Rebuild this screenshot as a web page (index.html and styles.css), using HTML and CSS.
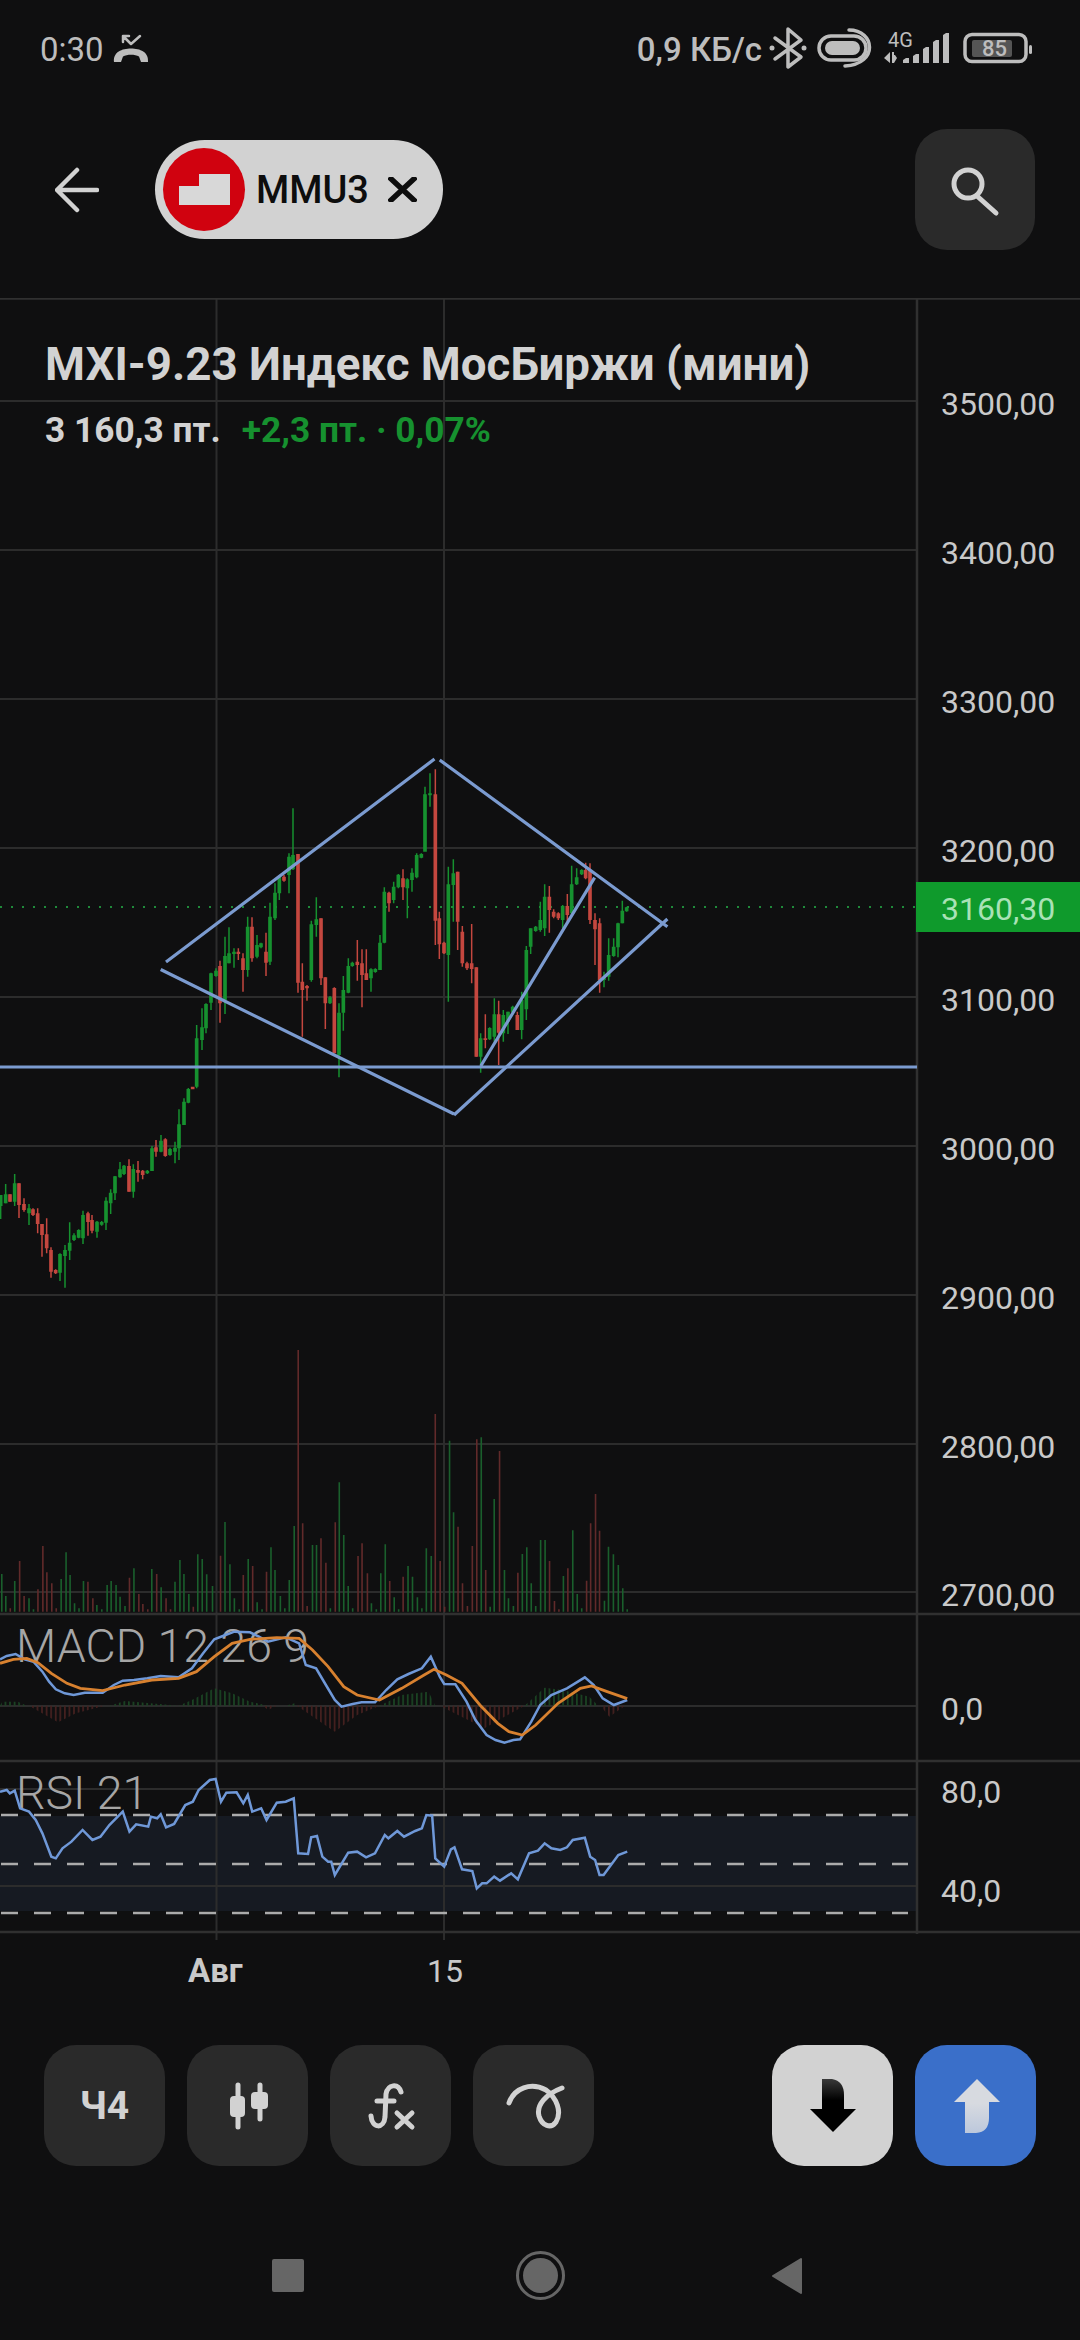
FILE: index.html
```html
<!DOCTYPE html>
<html lang="ru">
<head>
<meta charset="utf-8">
<title>MXI-9.23</title>
<link rel="stylesheet" href="styles.css">
</head>
<body>
<div class="screen">
  <header class="statusbar">
    <div class="status-left">
      <span class="clock">0:30</span>
      <svg class="ic-call" viewBox="112 20 38 58"><path class="st st-thin" d="M123 36L131 44L140 36M123 36V42M123 36H129"/><path class="sf" d="M114 62C113 52 122 48.500 131 48.500C140 48.500 149 52 148 62H141L139 56.500C135 54 127 54 123 56.500L121 62Z"/></svg>
    </div>
    <div class="status-right">
      <span class="speed">0,9 КБ/с</span>
      <svg class="ic-status" viewBox="768 20 266 58">
        <path class="st" d="M775 38L801 57L788 67V29L801 40L775 59"/>
        <circle class="sf" cx="772" cy="48" r="2.500"/><circle class="sf" cx="804" cy="48" r="2.500"/>
        <rect class="st" x="819" y="36" width="47" height="24" rx="12"/>
        <rect class="sf" x="825" y="41" width="35" height="14" rx="7"/>
        <path class="st" d="M849 30C875 30 879 64 845 66"/>
        <text class="net" x="888" y="47">4G</text>
        <path class="sf" d="M884 58L890 52V63ZM892 52V63H894L897 58L895 55H894V52Z"/>
        <path class="sf" d="M903 60l3-2h3v5h-6ZM913 56l3-2h3v9h-6ZM923 49l3-2h3v16h-6ZM933 42l3-2h3v23h-6ZM943 35l3-2h3v30h-6Z"/>
        <rect class="st" x="965" y="34.500" width="61" height="27" rx="7"/>
        <rect class="bat-fill" x="972" y="40" width="40" height="17" rx="2"/>
        <text class="bat" x="982" y="56">85</text>
        <rect class="sf" x="1029" y="45" width="3" height="9" rx="1.500"/>
      </svg>
    </div>
  </header>

  <nav class="topbar">
    <svg class="ic-back" viewBox="55 160 44 56"><path d="M97 188H58M77 168L57 188L77 208"/></svg>
    <div class="chip">
      <span class="chip-logo"><svg viewBox="0 0 51 31"><path d="M20 0H51V31H0V12H20Z"/></svg></span>
      <span class="chip-name">MMU3</span>
      <svg class="ic-x" viewBox="0 0 29 25"><path d="M1 0L28 25M28 0L1 25"/></svg>
    </div>
    <button class="tile search-tile" type="button" aria-label="Поиск"><svg class="ic-search" viewBox="948 162 54 54"><circle cx="968" cy="183" r="14"/><path d="M977 195L996 212"/></svg></button>
  </nav>

  <main class="chart">
    <svg class="chart-svg" viewBox="0 298 1080 1702" width="1080" height="1702">
      <defs>
        <pattern id="hist-g" patternUnits="userSpaceOnUse" width="10.240" height="10"><rect width="3.800" height="10" class="hist-g"/></pattern>
        <pattern id="hist-r" patternUnits="userSpaceOnUse" width="10.240" height="10"><rect width="3.800" height="10" class="hist-r"/></pattern>
      </defs>

      <rect class="rsi-band" x="0" y="1816" width="917" height="95"/>

      <path class="grid" d="M0 401H917M0 550H917M0 699H917M0 848H917M0 997H917M0 1146H917M0 1295H917M0 1444H917M0 1592H917M0 1706H917M0 1789H917M0 1886H917"/>
      <path class="grid" d="M216.500 298V1940M444 298V1940"/>
      <path class="frame" d="M917 298V1934M0 298.500H1080M0 1614H1080M0 1761H1080M0 1932H1080"/>

      <g transform="translate(0 1320) scale(.44643 .33333)">
        <path class="vol-g" d="M4 762V875M13 828V875M33 783V875M65 835V875M75 868V875M137 777V875M148 697V875M157 765V875M167 850V875M177 865V875M187 783V875M217 855V875M228 868V875M240 795V875M249 783V875M260 795V875M269 830V875M280 858V875M300 745V875M340 747V875M361 802V875M392 785V875M403 720V875M412 762V875M423 822V875M443 703V875M453 717V875M463 763V875M476 798V875M504 606V875M515 733V875M525 835V875M536 868V875M556 717V875M576 847V875M587 868V875M607 682V875M616 750V875M628 828V875M638 865V875M648 780V875M659 618V875M700 675V875M709 675V875M740 865V875M760 487V875M770 645V875M780 798V875M790 865V875M832 850V875M843 868V875M853 760V875M863 673V875M883 832V875M893 868V875M914 738V875M924 770V875M935 832V875M945 865V875M955 685V875M966 708V875M1007 362V875M1016 577V875M1078 352V875M1098 860V875M1107 537V875M1130 750V875M1139 835V875M1150 858V875M1170 702V875M1180 682V875M1190 790V875M1200 858V875M1211 660V875M1221 660V875M1262 768V875M1283 631V875M1293 822V875M1303 865V875M1354 842V875M1363 680V875M1374 703V875M1385 735V875M1395 805V875M1405 868V875"/>
        <path class="vol-r" d="M23 865V875M44 723V875M54 828V875M85 808V875M96 678V875M105 757V875M116 790V875M126 865V875M197 785V875M208 835V875M290 773V875M311 822V875M320 852V875M331 868V875M351 762V875M372 835V875M382 868V875M433 860V875M494 707V875M545 765V875M566 738V875M597 755V875M668 90V875M678 610V875M688 858V875M719 655V875M730 728V875M751 607V875M802 708V875M811 670V875M823 760V875M873 783V875M903 770V875M975 282V875M986 723V875M996 860V875M1026 620V875M1036 790V875M1047 858V875M1058 678V875M1068 358V875M1088 750V875M1119 393V875M1160 758V875M1231 723V875M1242 843V875M1252 868V875M1272 745V875M1314 782V875M1323 610V875M1334 522V875M1343 632V875"/>
      </g>

      <line class="last-price" x1="0" y1="907" x2="917" y2="907"/>

      <g transform="translate(0 1100) scale(.33333)">
        <path class="wick-g" d="M2 285V357M17 252V310M44 222V318M87 312V375M180 460V543M195 435V563M209 367V480M222 400V423M236 388V415M249 332V432M291 363V413M305 363V377M318 292V390M332 268V342M345 228V300M360 186V233M372 195V225M400 193V293M442 210V222M456 138V213M483 105V157M510 143V167M525 125V190M537 28V180M552 -5V75M565 -36V10"/>
        <path class="body-g" d="M2 285V318M17 283V310M44 250V305M87 325V340M180 462V518M195 450V468M209 428V452M222 406V420M236 390V413M249 345V415M291 365V395M305 366V374M318 302V368M332 278V310M345 229V280M360 208V232M372 197V222M400 207V275M442 212V220M456 145V213M483 122V155M510 147V165M525 143V155M537 73V145M552 5V75M565 -33V8"/>
        <path class="wick-r" d="M30 283V305M57 250V354M72 295V335M99 325V348M113 325V400M126 372V470M140 355V460M153 442V533M167 508V522M264 335V407M276 345V400M387 178V275M414 183V245M428 210V238M468 120V170M496 115V170"/>
        <path class="body-r" d="M30 283V305M57 250V315M72 312V330M99 328V345M113 340V372M126 372V405M140 403V445M153 450V515M167 510V520M264 340V366M276 360V392M387 198V275M414 210V218M428 212V225M468 142V155M496 118V168M578 -40V-32"/>
      </g>

      <g transform="translate(190 790) scale(.33333)">
        <path class="wick-g" d="M20 705V895M36 655V780M48 640V730M63 548V660M78 535V560M105 440V672M117 412V520M132 475V533M173 380V560M201 435V505M213 458V475M240 338V525M255 280V390M268 255V330M297 190V310M309 55V240M364 392V575M379 322V440M420 618V642M447 640V862M460 558V722M475 505V610M487 515V530M543 535V605M556 535V548M570 435V540M583 292V460M611 275V340M625 252V295M652 265V385M666 235V305M680 190V265M694 190V205"/>
        <path class="body-g" d="M20 745V890M36 712V750M48 642V715M63 550V638M78 542V558M105 498V630M117 490V520M132 485V492M173 410V540M201 465V500M213 460V472M240 380V515M255 308V385M268 258V310M297 200V255M309 195V238M364 403V570M379 388V405M420 622V640M447 668V795M460 600V668M475 528V608M487 518V528M543 538V565M556 537V546M570 458V540M583 305V458M611 290V330M625 254V292M652 268V295M666 248V270M680 195V262M694 192V203"/>
        <path class="wick-r" d="M90 512V698M145 475V510M159 490V605M186 382V515M228 428V558M282 255V275M324 192V608M337 520V740M351 585V632M393 385V585M406 562V717M433 592V790M502 450V572M516 478V652M529 478V570M597 305V365M639 238V330"/>
        <path class="body-r" d="M90 528V640M145 485V492M159 505V540M186 410V505M228 485V518M282 260V272M324 192V578M337 575V600M351 588V595M393 385V565M406 562V640M433 594V790M502 515V525M516 520V555M529 550V570M597 308V340M639 265V292"/>
      </g>

      <g transform="translate(420 750) scale(.33333)">
        <path class="wick-g" d="M15 110V300M30 70V170M85 350V755M100 328V515M182 850V968M209 832V870M223 745V875M250 780V875M264 785V852M278 767V790M305 725V868M319 588V810M332 535V612M347 528V545M361 455V545M374 403V558M428 465V535M455 347V495M470 355V405M485 358V375M552 665V712M566 565V692M581 565V620M594 518V622M607 452V520M620 470V485"/>
        <path class="body-g" d="M15 133V305M30 130V136M85 403V615M100 370V405M182 865V920M209 834V868M223 793V860M250 795V850M264 785V815M278 770V787M305 750V840M319 600V778M332 535V590M347 530V543M361 510V540M374 440V535M428 468V510M455 403V490M470 382V403M485 360V373M552 682V690M566 615V680M581 590V618M594 520V592M607 482V520M620 472V484"/>
        <path class="wick-r" d="M46 58V585M58 485V627M72 575V612M113 365V600M127 528V650M141 635V660M155 522V700M169 652V920M196 793V895M236 752V945M292 785V840M388 408V548M401 478V505M415 487V510M442 432V515M497 338V388M510 340V522M525 490V645M539 505V728"/>
        <path class="body-r" d="M46 133V512M58 505V583M72 578V610M113 365V515M127 545V640M141 640V655M155 640V657M169 652V920M196 865V870M236 793V848M292 795V840M388 440V480M401 485V500M415 490V505M442 468V495M497 360V385M510 360V510M525 510V538M539 520V690"/>
      </g>

      <path class="draw" d="M166 962L434.500 759M439.700 760L667.400 926.700M160.700 969.500L454 1114M454 1115L667.400 919M480.800 1066L594.600 877.700"/>
      <line class="draw" x1="0" y1="1067" x2="917" y2="1067"/>

      <text class="ind" x="16" y="1662">MACD 12 26 9</text>
      <g transform="translate(0 1600) scale(.44643 .33333)">
        <polygon fill="url(#hist-g)" points="0,317 5,305 40,305 60,317"/>
        <polygon fill="url(#hist-g)" points="245,317 280,303 400,317 430,300 480,265 520,280 560,305 600,317 640,317 660,310 665,317"/>
        <polygon fill="url(#hist-g)" points="850,317 900,285 960,275 975,317"/>
        <polygon fill="url(#hist-g)" points="1175,317 1220,263 1260,270 1320,290 1340,317"/>
        <polygon fill="url(#hist-r)" points="65,317 130,367 170,340 235,317"/>
        <polygon fill="url(#hist-r)" points="590,317 600,330 620,317"/>
        <polygon fill="url(#hist-r)" points="665,317 750,395 800,345 850,317"/>
        <polygon fill="url(#hist-r)" points="985,317 1085,385 1130,350 1175,317"/>
        <polygon fill="url(#hist-r)" points="1345,317 1365,350 1400,317"/>
        <polyline class="macd" points="0,178 15,168 35,162 55,178 75,185 95,215 110,245 125,268 145,280 165,285 190,278 230,278 255,255 275,242 300,240 330,235 360,228 400,232 430,205 455,160 480,118 505,105 525,95 560,97 580,110 600,125 640,112 670,130 685,195 708,205 730,255 750,300 765,320 790,312 810,307 840,307 865,270 890,238 915,222 945,205 965,170 985,230 995,252 1020,253 1045,305 1065,360 1090,405 1110,420 1130,428 1150,420 1165,418 1190,365 1210,315 1235,285 1270,265 1310,232 1330,255 1350,295 1375,315 1405,300"/>
        <polyline class="signal" points="0,190 30,178 60,175 85,188 115,220 150,250 180,265 230,272 280,255 340,240 400,235 440,215 480,170 520,130 560,118 620,113 670,115 700,150 735,200 770,260 800,285 850,300 900,265 950,225 972,208 1000,225 1035,250 1075,315 1115,370 1140,395 1170,405 1200,375 1250,310 1300,265 1325,258 1360,275 1405,296"/>
      </g>

      <path class="dash" d="M1 1815H908M1 1864H908M1 1913H908"/>
      <text class="ind" x="16" y="1809">RSI 21</text>
      <g transform="translate(0 1600) scale(.44643 .33333)">
        <polyline class="macd" points="0,575 15,570 22,580 33,572 45,625 65,635 80,660 95,700 115,770 125,775 140,745 160,725 185,690 207,720 225,710 245,675 275,635 290,695 305,673 332,680 338,650 352,655 360,643 372,682 390,672 415,615 432,605 445,570 470,540 483,537 495,605 507,578 530,577 545,610 555,585 565,635 585,625 597,660 620,608 640,605 658,595 668,760 690,762 697,712 710,708 722,770 735,785 742,785 750,825 780,758 800,755 820,772 840,760 862,705 870,715 890,693 905,710 930,693 945,685 955,645 968,647 975,775 995,800 1010,748 1018,742 1035,808 1058,813 1068,865 1080,850 1090,850 1107,830 1120,842 1145,820 1160,838 1185,760 1205,752 1220,730 1235,745 1255,750 1270,742 1283,720 1310,713 1322,770 1333,780 1343,825 1352,825 1385,765 1405,755"/>
      </g>

      <text class="axis" x="941" y="415">3500,00</text>
      <text class="axis" x="941" y="564">3400,00</text>
      <text class="axis" x="941" y="713">3300,00</text>
      <text class="axis" x="941" y="862">3200,00</text>
      <rect class="price-tag" x="916" y="882" width="164" height="50"/>
      <text class="axis price-text" x="941" y="920">3160,30</text>
      <text class="axis" x="941" y="1011">3100,00</text>
      <text class="axis" x="941" y="1160">3000,00</text>
      <text class="axis" x="941" y="1309">2900,00</text>
      <text class="axis" x="941" y="1458">2800,00</text>
      <text class="axis" x="941" y="1606">2700,00</text>
      <text class="axis" x="941" y="1720">0,0</text>
      <text class="axis" x="941" y="1803">80,0</text>
      <text class="axis" x="941" y="1902">40,0</text>
      <text class="date date-month" x="188" y="1982">Авг</text>
      <text class="date" x="427" y="1982">15</text>
    </svg>

    <div class="quote">
      <h1 class="quote-title">MXI-9.23 Индекс МосБиржи (мини)</h1>
      <p class="quote-line"><span>3 160,3 пт.</span><span class="quote-change">+2,3 пт. · 0,07%</span></p>
    </div>
  </main>

  <section class="toolbar">
    <button class="tile tile-text" type="button">Ч4</button>
    <button class="tile" type="button" aria-label="Тип графика"><svg class="ic-tool" viewBox="215 2070 64 72"><path class="tool-line" d="M237 2085V2127M259 2085V2119"/><rect class="tool-fill" x="229" y="2096" width="15" height="21" rx="4"/><rect class="tool-fill" x="250" y="2092" width="17" height="17" rx="4"/></svg></button>
    <button class="tile" type="button" aria-label="Индикаторы"><svg class="ic-tool" viewBox="360 2070 64 72"><path class="tool-line" d="M402 2092C399 2083 389 2084 387 2094L386 2117C385 2129 373 2129 372 2116M378 2101H395M398 2113L413 2127M413 2113L398 2127"/></svg></button>
    <button class="tile" type="button" aria-label="Рисование"><svg class="ic-tool" viewBox="501 2070 64 72"><path class="tool-line" d="M508 2103C513 2088 530 2082 545 2090C556 2098 561 2112 555 2122C550 2129 541 2126 538 2116C535 2105 545 2094 561 2088"/></svg></button>
    <button class="tile tile-sell" type="button" aria-label="Продать"><svg class="ic-tool" viewBox="801 2070 64 72"><defs><linearGradient id="sell-grad" x1="0" y1="0" x2="0" y2="1"><stop offset="0" stop-color="#3a3a3a"/><stop offset=".4" stop-color="#000"/></linearGradient></defs><path class="sell-arrow" d="M822 2079H832Q844 2081 844 2095V2109H856L833 2132L810 2109H822Z"/></svg></button>
    <button class="tile tile-buy" type="button" aria-label="Купить"><svg class="ic-tool" viewBox="943 2070 64 72"><defs><linearGradient id="buy-grad" x1="0" y1="0" x2="0" y2="1"><stop offset=".45" stop-color="#d7dae0"/><stop offset="1" stop-color="#bcc8dc"/></linearGradient></defs><path class="buy-arrow" d="M976 2079L999 2102H988V2118Q988 2132 975 2133H964V2102H953Z"/></svg></button>
  </section>

  <footer class="navbar">
    <span class="nav-square"></span>
    <span class="nav-home"><span class="nav-dot"></span></span>
    <svg class="nav-back" viewBox="0 0 32 38"><path d="M30 2V36L2 19Z"/></svg>
  </footer>
</div>
</body>
</html>
```
FILE: styles.css
```css
* { box-sizing: border-box; }
html, body { margin: 0; padding: 0; background: #0f0f10; }
.screen {
  width: 1080px;
  height: 2340px;
  overflow: hidden;
  display: flex;
  flex-direction: column;
  background: #0f0f10;
  font-family: Roboto, "Noto Sans", sans-serif;
  color: #d2d2d2;
}

/* status bar */
.statusbar {
  height: 98px;
  flex: none;
  display: flex;
  align-items: center;
  justify-content: space-between;
  padding: 0 46px 0 40px;
  color: #bdbdbd;
}
.status-left, .status-right { display: flex; align-items: center; }
.clock { font-size: 33px; width: 72px; }
.speed { font-size: 33px; font-weight: 500; margin-right: 6px; }
.ic-call { width: 38px; height: 58px; }
.ic-status { width: 266px; height: 58px; }
.st { fill: none; stroke: #bdbdbd; stroke-width: 3.500; stroke-linejoin: round; stroke-linecap: round; }
.st-thin { stroke-width: 2.500; }
.sf { fill: #bdbdbd; }
.bat-fill { fill: #555; }
.net { font-size: 20px; fill: #bdbdbd; font-family: Roboto, sans-serif; }
.bat { font-size: 22px; font-weight: 500; fill: #bdbdbd; font-family: Roboto, sans-serif; }

/* top bar */
.topbar {
  height: 200px;
  flex: none;
  display: flex;
  align-items: center;
  padding: 0 45px 17px 55px;
}
.ic-back { width: 44px; height: 56px; margin-right: 56px; }
.ic-back path { fill: none; stroke: #d2d2d2; stroke-width: 4.500; stroke-linecap: round; stroke-linejoin: round; }
.chip {
  width: 288px;
  height: 99px;
  border-radius: 50px;
  background: #d2d2d2;
  display: flex;
  align-items: center;
  padding-left: 8px;
  color: #0d0d0d;
}
.chip-logo {
  width: 82px;
  height: 83px;
  border-radius: 50%;
  background: #d0020f;
  display: flex;
  align-items: center;
  justify-content: center;
  flex: none;
}
.chip-logo svg { width: 51px; height: 31px; }
.chip-logo path { fill: #d8d8d8; }
.chip-name { font-size: 38px; font-weight: 500; margin-left: 11px; width: 132px; }
.ic-x { width: 29px; height: 25px; }
.ic-x path { fill: none; stroke: #0d0d0d; stroke-width: 5.500; }
.tile {
  width: 120px;
  height: 121px;
  padding: 0;
  border: 0;
  border-radius: 32px;
  background: #2a2a2a;
  display: flex;
  align-items: center;
  justify-content: center;
  flex: none;
  font-family: inherit;
}
.search-tile { margin-left: auto; }
.ic-search { width: 54px; height: 54px; }
.ic-search circle, .ic-search path { fill: none; stroke: #d2d2d2; stroke-width: 5; stroke-linecap: round; }

/* chart */
.chart { position: relative; height: 1702px; flex: none; }
.chart-svg { display: block; }
.grid { fill: none; stroke: #2c2c2c; stroke-width: 2; }
.frame { fill: none; stroke: #303030; stroke-width: 2.500; }
.rsi-band { fill: #161a22; }
.last-price { stroke: #1f8a3a; stroke-width: 2; stroke-dasharray: 2 9; }
.wick-g { fill: none; stroke: #16912f; stroke-width: 4.500; }
.body-g { fill: none; stroke: #16912f; stroke-width: 11; }
.wick-r { fill: none; stroke: #c4473f; stroke-width: 4.500; }
.body-r { fill: none; stroke: #c4473f; stroke-width: 11; }
.vol-g { fill: none; stroke: #1a5f2c; stroke-width: 3.600; }
.vol-r { fill: none; stroke: #612a2a; stroke-width: 3.600; }
.hist-g { fill: #1a4423; }
.hist-r { fill: #45201f; }
.draw { fill: none; stroke: #7b9bd0; stroke-width: 3.200; }
.macd { fill: none; stroke: #6f98d8; stroke-width: 2.500; vector-effect: non-scaling-stroke; }
.signal { fill: none; stroke: #d8812f; stroke-width: 2.800; vector-effect: non-scaling-stroke; }
.dash { fill: none; stroke: #ababab; stroke-width: 2.600; stroke-dasharray: 17 16; }
.ind { font-size: 46.500px; font-weight: 300; fill: #a6a6a6; }
.axis { font-size: 32px; fill: #c9c9c9; }
.price-tag { fill: #0f9a2c; }
.price-text { fill: #a9e2b6; }
.date { font-size: 32px; font-weight: 400; fill: #c9c9c9; }
.date-month { font-size: 33px; font-weight: 700; }

.quote { position: absolute; left: 45px; top: 40px; }
.quote-title { margin: 0; font-size: 45.700px; line-height: 54px; font-weight: 700; color: #d2d2d2; }
.quote-line { margin: 18px 0 0; font-size: 35.300px; line-height: 40px; font-weight: 700; color: #d2d2d2; display: flex; gap: 21px; }
.quote-change { color: #16912f; }

/* toolbar */
.toolbar { flex: none; display: flex; gap: 22px; padding: 45px 45px 0 44px; }
.toolbar .tile { width: 121px; }
.tile-text { font-size: 39px; font-weight: 700; color: #d2d2d2; }
.tile-sell { margin-left: 156px; background: #d2d2d2; }
.tile-buy { background: #3a6fc9; }
.ic-tool { width: 64px; height: 72px; }
.tool-line { fill: none; stroke: #d2d2d2; stroke-width: 5; stroke-linecap: round; stroke-linejoin: round; }
.tool-fill { fill: #d2d2d2; }
.sell-arrow { fill: url(#sell-grad); }
.buy-arrow { fill: url(#buy-grad); }

/* navigation */
.navbar { flex: none; display: flex; align-items: center; margin-top: 85px; padding-left: 272px; }
.nav-square { width: 32px; height: 33px; border-radius: 2px; background: #666; }
.nav-home {
  width: 49px;
  height: 49px;
  margin-left: 212px;
  border-radius: 50%;
  border: 3px solid #666;
  display: flex;
  align-items: center;
  justify-content: center;
}
.nav-dot { width: 35px; height: 35px; border-radius: 50%; background: #666; }
.nav-back { width: 32px; height: 38px; margin-left: 206px; }
.nav-back path { fill: #666; stroke: #666; stroke-width: 2; stroke-linejoin: round; }
```
